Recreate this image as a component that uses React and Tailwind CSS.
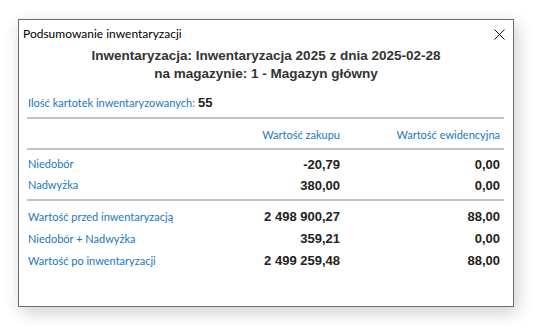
import React from "react";

const rowsTop = [
  { label: "Niedobór", zakup: "-20,79", ewid: "0,00" },
  { label: "Nadwyżka", zakup: "380,00", ewid: "0,00" },
];

const rowsBottom = [
  { label: "Wartość przed inwentaryzacją", zakup: "2 498 900,27", ewid: "88,00" },
  { label: "Niedobór + Nadwyżka", zakup: "359,21", ewid: "0,00" },
  { label: "Wartość po inwentaryzacji", zakup: "2 499 259,48", ewid: "88,00" },
];

function Row({ row, h }) {
  return (
    <div className={`flex items-center ${h}`}>
      <div className="flex-1 pl-[1px] text-[11px] text-[#1a78bd] [font-family:Lato,'Noto_Sans',sans-serif]">
        {row.label}
      </div>
      <div className="w-[120px] text-right font-bold text-[13px] text-[#222]">{row.zakup}</div>
      <div className="w-[160px] text-right font-bold text-[13px] text-[#222]">{row.ewid}</div>
    </div>
  );
}

export default function App() {
  return (
    <div className="w-[535px] h-[329px] bg-white pt-[19px] pl-[18px] [font-family:'Liberation_Sans',Arial,sans-serif]">
      <div className="w-[496px] h-[288px] bg-white border border-[#6e6e6e] shadow-[3px_5px_16px_rgba(0,0,0,0.2)] flex flex-col">
        {/* Title bar */}
        <div className="flex items-center justify-between h-[25px] pl-[4px] pr-[8px] pt-[2px]">
          <span className="text-[12px] text-black [font-family:Lato,'Noto_Sans',sans-serif]">
            Podsumowanie inwentaryzacji
          </span>
          <svg width="11" height="11" viewBox="0 0 11 11" className="mt-[1px]">
            <path d="M0.5 0.5 L10.5 10.5 M10.5 0.5 L0.5 10.5" stroke="#111" strokeWidth="1" />
          </svg>
        </div>

        <div className="px-[8px] flex flex-col">
          <div className="text-center font-bold text-[13.5px] leading-[18px] text-[#333] mt-[2px]">
            <div>Inwentaryzacja: Inwentaryzacja 2025 z dnia 2025-02-28</div>
            <div>na magazynie: 1 - Magazyn główny</div>
          </div>

          <div className="flex items-baseline mt-[10px] pl-[1px] h-[18px]">
            <span className="text-[11px] text-[#1a78bd] [font-family:Lato,'Noto_Sans',sans-serif]">
              Ilość kartotek inwentaryzowanych:
            </span>
            <span className="ml-[3px] font-bold text-[13px] text-[#222]">55</span>
          </div>

          <div className="mt-[6px] mr-[1px] border-t-2 border-[#c3c3c3]" />

          <div className="flex items-center h-[29px] pt-[3px] pr-[5px]">
            <div className="flex-1" />
            <div className="w-[120px] text-right text-[11px] text-[#1a78bd] [font-family:Lato,'Noto_Sans',sans-serif]">
              Wartość zakupu
            </div>
            <div className="w-[160px] text-right text-[11px] text-[#1a78bd] [font-family:Lato,'Noto_Sans',sans-serif]">
              Wartość ewidencyjna
            </div>
          </div>

          <div className="mr-[1px] border-t-2 border-[#c3c3c3]" />

          <div className="pt-[4px] pb-[3px] pr-[5px]">
            {rowsTop.map((r) => (
              <Row key={r.label} row={r} h="h-[21px]" />
            ))}
          </div>

          <div className="mr-[1px] border-t-2 border-[#c3c3c3]" />

          <div className="pt-[5px] pr-[5px]">
            {rowsBottom.map((r) => (
              <Row key={r.label} row={r} h="h-[22px]" />
            ))}
          </div>
        </div>
      </div>
    </div>
  );
}
